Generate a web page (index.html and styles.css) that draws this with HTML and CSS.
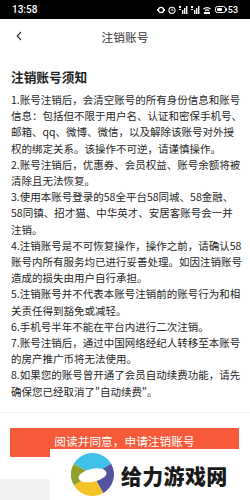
FILE: index.html
```html
<!DOCTYPE html>
<html lang="zh-CN">
<head>
<meta charset="utf-8">
<title>注销账号</title>
<link rel="stylesheet" href="styles.css">
</head>
<body>
<div class="page">
  <div class="status">
    <span class="time">13:58</span>
    <div class="sicons">
      <svg width="8" height="8" viewBox="0 0 8 8"><circle cx="4" cy="4" r="2.6" fill="none" stroke="#fff" stroke-width="1.4"/><rect x="0" y="3" width="1" height="2" fill="#fff"/><rect x="7" y="3" width="1" height="2" fill="#fff"/></svg>
      <svg width="8" height="8" viewBox="0 0 8 8"><circle cx="4" cy="4.3" r="3.1" fill="none" stroke="#fff" stroke-width="1.1"/><path d="M4 2.5V4.4H5.5" fill="none" stroke="#fff" stroke-width="0.9"/></svg>
      <svg width="9" height="8" viewBox="0 0 9 8"><rect x="0" y="0" width="2" height="2" fill="#fff"/><rect x="0" y="3" width="2" height="1" fill="#fff"/><rect x="3" y="4" width="1.4" height="4" fill="#fff"/><rect x="5" y="2" width="1.4" height="6" fill="#fff"/><rect x="7" y="0" width="1.4" height="8" fill="#fff"/></svg>
      <svg width="9" height="8" viewBox="0 0 9 8"><rect x="0" y="0" width="2" height="2" fill="#fff"/><rect x="0" y="3" width="2" height="1" fill="#fff"/><rect x="3" y="4" width="1.4" height="4" fill="#fff"/><rect x="5" y="2" width="1.4" height="6" fill="#fff"/><rect x="7" y="0" width="1.4" height="8" fill="#fff"/></svg>
      <svg width="8" height="8" viewBox="0 0 8 8"><path d="M0.5 3A5 5 0 0 1 7.5 3" fill="none" stroke="#fff" stroke-width="1.2"/><path d="M2 4.8A3 3 0 0 1 6 4.8" fill="none" stroke="#fff" stroke-width="1.2"/><rect x="1" y="6" width="6" height="2" fill="#fff"/></svg>
      <svg class="batt" width="12" height="7" viewBox="0 0 12 7"><rect x="0.5" y="0.5" width="10" height="6" rx="2" fill="none" stroke="#fff" stroke-width="1"/><rect x="2" y="2" width="5" height="3" rx="1" fill="#fff"/><rect x="11" y="2.2" width="1" height="2.6" fill="#fff"/></svg>
      <span class="pct">53</span>
    </div>
  </div>

  <div class="nav">
    <svg class="back" width="6" height="10" viewBox="0 0 6 10"><path d="M5 1L1.2 5L5 9" fill="none" stroke="#333" stroke-width="1.2"/></svg>
    <span class="title">注销账号</span>
    <span></span>
  </div>

  <div class="content">
    <h1>注销账号须知</h1>
    <p>1.账号注销后，会清空账号的所有身份信息和账号信息：包括但不限于用户名、认证和密保手机号、邮箱、qq、微博、微信，以及解除该账号对外授权的绑定关系。该操作不可逆，请谨慎操作。</p>
    <p>2.账号注销后，优惠券、会员权益、账号余额将被清除且无法恢复。</p>
    <p>3.使用本账号登录的58全平台58同城、58金融、58同镇、招才猫、中华英才、安居客账号会一并注销。</p>
    <p>4.注销账号是不可恢复操作，操作之前，请确认58账号内所有服务均已进行妥善处理。如因注销账号造成的损失由用户自行承担。</p>
    <p>5.注销账号并不代表本账号注销前的账号行为和相关责任得到豁免或减轻。</p>
    <p>6.手机号半年不能在平台内进行二次注销。</p>
    <p>7.账号注销后，通过中国网络经纪人转移至本账号的房产推广币将无法使用。</p>
    <p>8.如果您的账号曾开通了会员自动续费功能，请先确保您已经取消了"自动续费"。</p>
  </div>

  <div class="footer">
    <button class="apply">阅读并同意，申请注销账号</button>
  </div>
  <div class="bottomband"></div>

  <div class="watermark">
    <svg class="logo" width="43" height="43" viewBox="0 0 100 100">
      <path d="M50 50L6.7 25A50 50 0 0 1 93.3 25Z" fill="#3ec2ea"/>
      <path d="M50 50L93.3 25A50 50 0 0 1 75 93.3Z" fill="#56539f"/>
      <path d="M50 50L75 93.3A50 50 0 0 1 6.7 75Z" fill="#f3c328"/>
      <path d="M50 50L6.7 75A50 50 0 0 1 6.7 25Z" fill="#8fa12c"/>
      <ellipse cx="50" cy="52" rx="33" ry="15" transform="rotate(-12 50 52)" fill="#fff"/>
    </svg>
    <span class="wmtext">给力游戏网</span>
  </div>
</div>
</body>
</html>
```

FILE: styles.css
```css
* { box-sizing: border-box; }
html, body { margin: 0; padding: 0; background: #fff; }
body {
  font-family: "Noto Sans CJK SC", "Noto Sans", sans-serif;
  color: #222;
}
.page {
  position: relative;
  width: 250px;
  height: 500px;
  overflow: hidden;
  display: flex;
  flex-direction: column;
}
.status {
  height: 19px;
  background: #000;
  color: #fff;
  display: flex;
  align-items: center;
  justify-content: space-between;
  padding: 0 12px 0 12px;
}
.time {
  font-family: "Roboto", "Liberation Sans", sans-serif;
  font-size: 10px;
  font-weight: 500;
}
.sicons {
  display: flex;
  align-items: center;
  gap: 3px;
}
.sicons svg { display: block; }
.batt { margin-left: 1px; }
.pct {
  font-family: "Roboto", "Liberation Sans", sans-serif;
  font-size: 9px;
  font-weight: 500;
  margin-left: -2px;
}
.nav {
  height: 34px;
  display: grid;
  grid-template-columns: 40px 1fr 40px;
  align-items: center;
}
.back { margin-left: 16px; display: block; }
.title {
  text-align: center;
  font-size: 11.7px;
  color: #333;
}
.content {
  padding: 16px 8px 0 11px;
}
h1 {
  margin: 0 0 7px 0;
  font-size: 12.7px;
  line-height: 16px;
  font-weight: 700;
  color: #222;
}
p {
  margin: 0;
  font-size: 10.5px;
  line-height: 16.2px;
  color: #262626;
}
.footer {
  margin-top: 12px;
  padding: 15px 11px 0 10px;
  border-top: 1px solid #f4f4f4;
  background: #fff;
}
.apply {
  display: block;
  width: 229px;
  height: 29px;
  border: none;
  border-radius: 1px;
  background: #f65a39;
  color: #fff;
  font-family: "Noto Sans CJK SC", sans-serif;
  font-size: 11.7px;
  line-height: 14px;
  padding: 0 0 3px 0;
}
.bottomband {
  margin-top: 22px;
  flex: 1;
  background: #f2f2f2;
}
.watermark {
  position: absolute;
  right: 0;
  bottom: 0;
  width: 200px;
  height: 51px;
  background: #fff;
  display: flex;
  align-items: center;
  padding-left: 21px;
  gap: 7px;
}
.logo { display: block; }
.wmtext {
  font-size: 21px;
  font-weight: 900;
  color: #1a1a1a;
  letter-spacing: 0.3px;
}
```
